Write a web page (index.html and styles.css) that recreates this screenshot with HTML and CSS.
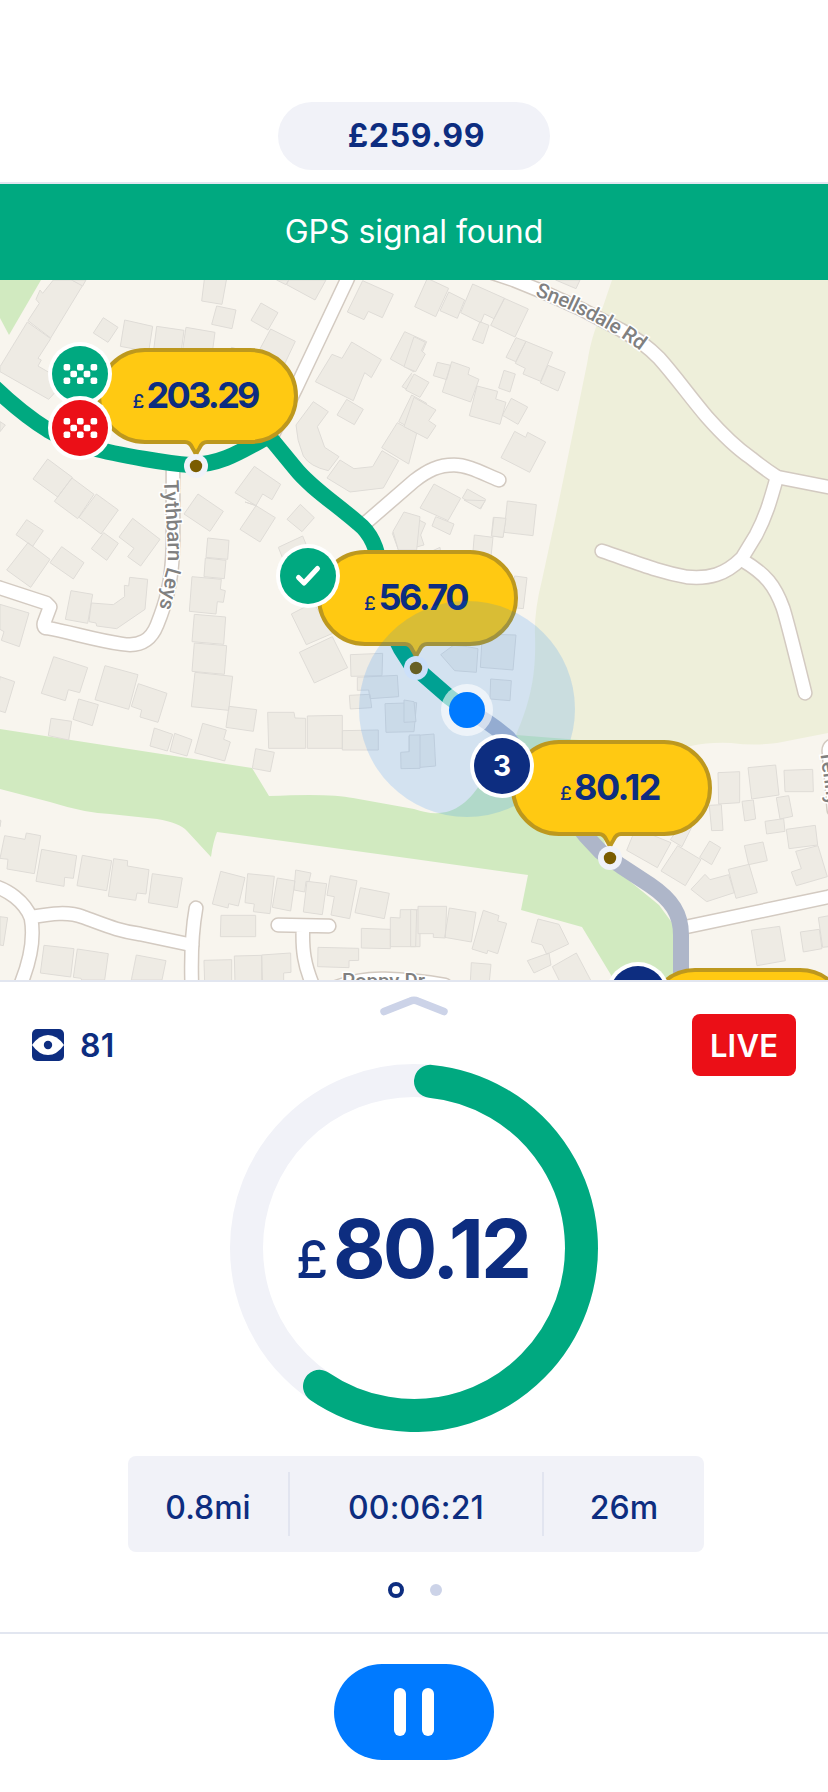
FILE: index.html
```html
<!DOCTYPE html>
<html lang="en">
<head>
<meta charset="utf-8">
<title>Live run</title>
<link rel="stylesheet" href="styles.css">
</head>
<body>
<div class="app">
  <header class="header"><div class="total"><span>£259.99</span></div></header>
  <div class="banner"><span>GPS signal found</span></div>

  <svg class="map" viewBox="0 280 828 700" width="828" height="700">
    <defs>
      <g id="flag">
        <circle r="32" fill="#fff"/><circle r="28" fill="var(--c)"/>
        <g fill="#fff">
          <rect x="-16.4" y="-10" width="6.6" height="6.6" rx="1.8"/><rect x="-3" y="-10" width="6.6" height="6.6" rx="1.8"/><rect x="10.6" y="-10" width="6.6" height="6.6" rx="1.8"/>
          <rect x="-9.6" y="-3.3" width="6.6" height="6.6" rx="1.8"/><rect x="3.7" y="-3.3" width="6.6" height="6.6" rx="1.8"/>
          <rect x="-16.4" y="3.4" width="6.6" height="6.6" rx="1.8"/><rect x="-3" y="3.4" width="6.6" height="6.6" rx="1.8"/><rect x="10.6" y="3.4" width="6.6" height="6.6" rx="1.8"/>
        </g>
      </g>
      <g id="pin">
        <path class="pin-body" d="M-51-116H54a46 46 0 0 1 0 92H11Q6-24 3.500-18Q1-14 0-11.500Q-1-14-3.500-18Q-6-24-11-24H-51a46 46 0 0 1 0-92Z"/>
        <circle r="12" fill="#f0f2f9"/><circle r="6.200" fill="#7a5c00"/>
      </g>
      <g id="roads">
        <path d="M352 268L347 280L296 388L270 440"/>
        <path d="M490 272L514 280L541 291L581 309L621 330C640 341 648 347 659 358C676 377 690 397 707 417C722 434 735 447 751 458Q762 467 777 477L828 487L840 489"/>
        <path d="M777 477C770 502 766 516 756 535L742 558C725 575 709 579 687 577C660 572 640 564 602 551"/>
        <path d="M742 560C766 574 775 586 783 608Q787 620 805 693"/>
        <path d="M499 480C482 473 468 465 454 465C439 465 428 470 414 481L362 526"/>
        <path d="M173 465L173 545C172 585 165 605 157 625C151 640 140 647 122 644C95 640 70 632 47 628Q43 628 44 623L50 607L46 603L0 588L-10 585"/>
        <path d="M-10 885C8 889 25 902 31 918C35 940 30 962 20 986"/>
        <path d="M31 917C50 914 68 911 83 917C105 925 118 931 140 934L192 945"/>
        <path d="M196 908Q190 942 192 990"/>
        <path d="M278 925L329 926M303 926C302 950 304 965 314 988"/>
        <path d="M320 995Q350 978 385 979Q415 980 445 985"/>
        <path d="M681 928L828 897L840 894"/>
        <path d="M840 744Q828 744 829 752L834 810"/>
      </g>
      <path id="snell" d="M535 296C565 306 618 331 652 360"/>
      <path id="tyth" d="M164 480C165 520 171 555 166 572Q164 592 158 612"/>
    </defs>

    <rect y="280" width="828" height="700" fill="#f8f5ee"/>
    <path fill="#eeefda" d="M612 280L594 333Q590 345 587 364L555 520L542 580Q534 612 535 635C536 668 533 696 516 735L560 770L640 760L691 746Q709 742 731 743Q755 746 777 743L828 733V280Z"/>
    <g fill="#d1eac0">
      <path d="M0 280H41L9 335L0 318Z"/>
      <path d="M0 729L252 768L269 796Q330 793 353 798L414 809C445 820 466 809 484 778L516 735L580 740L610 865L659 905L681 935V980H614L582 927L521 910L528 875L414 859L217 832Q213 842 211 857L187 831Q180 823 157 819L110 814Q85 813 50 802L0 789Z"/>
    </g>

    <g class="buildings">
      <g transform="translate(0 280) scale(.33333)">
        <path d="M160 0L128 40L120 30L108 58L118 70L84 122L152 174L248 16L215 0Z"/>
        <path d="M82 126L152 176L114 235L124 240L114 258L155 282L190 310L146 358L0 275V260Z"/>
        <path d="M215 0L248 18L258 0ZM0 425L16 435L0 455Z"/>
        <path d="M310 113L354 142L324 187L280 159ZM374 120L458 139L446 215L361 199ZM470 139L552 151L542 225L461 210ZM558 142L645 157L636 225L548 210Z"/>
        <path d="M614 -10H681L666 73L605 63ZM650 78L708 90L696 146L635 133ZM783 69L834 98L804 150L753 121ZM812 147L886 184L850 260L776 214ZM694 202L740 215L710 240Z"/>
        <path d="M830 0L858 14L866 0ZM866 0L860 14L945 60L978 0Z"/>
        <path d="M1088 2L1180 43L1147 113L1105 94L1092 119L1042 96ZM1055 186L1144 239L1114 293L1094 278L1060 362L946 305L996 223L1026 235Z"/>
        <path d="M1214 155L1280 185L1242 276L1171 237ZM1236 278L1206 320L1250 345M1040 358L1090 388L1063 434L1011 405Z"/>
        <path d="M940 365L985 395L952 440L974 502L1017 530L985 572Q930 560 910 528Q890 480 888 435Z"/>
        <path d="M1020 540L1062 566L1118 560L1146 512L1196 542L1150 624L1050 636L981 594Z"/>
        <path d="M1192 428L1250 460L1226 552L1145 503ZM1235 345L1280 370L1250 455L1196 425Z"/>
        <path d="M143 537L217 592L173 651L99 597ZM216 594L282 643L233 716L163 664ZM289 642L355 690L303 762L237 712Z"/>
        <path d="M763 559L842 613L816 659L788 642L768 677L705 638ZM594 642L670 694L630 754L552 702ZM768 677L826 713L780 786L720 748ZM901 673L943 713L906 755L861 718ZM735 666L770 677L764 676Z"/>
      </g>
      <g transform="translate(414 280) scale(.33333)">
        <path d="M40 -5L104 25L65 110L2 80ZM104 36L152 60L130 115L78 92ZM176 12L272 55L240 116L211 102L200 128L140 98ZM271 55L343 87L303 171L230 136ZM198 125L225 136L207 191L175 179Z"/>
        <path d="M306 173L336 184L305 245L276 232ZM336 184L416 217L380 304L327 282L334 265L304 250ZM402 256L454 277L432 333L379 309ZM425 0L486 26L498 0Z"/>
        <path d="M0 170L34 187L22 212L34 222L5 275L-30 260ZM70 247L110 256L98 299L58 287ZM113 245L167 264L162 283L195 298L170 366L85 336ZM0 282L45 307L18 352L-25 330ZM189 318L251 334L245 357L276 367L258 433L166 407ZM270 271L304 282L288 336L254 324ZM292 355L341 381L312 433L265 406Z"/>
        <path d="M0 352L66 390L44 422L66 437L40 476L-30 440ZM302 454L335 472L341 457L395 486L347 577L261 533ZM60 612L140 655L102 722L18 684ZM160 627L215 658L200 687L145 654ZM280 663L367 674L357 767L270 757ZM238 712L275 717L267 772L232 768Z"/>
        <path d="M-25 700L35 730L20 765L30 795L-45 815L-65 760ZM65 710L120 732L108 764L54 738ZM150 660L214 662L198 686Z"/>
      </g>
      <g transform="translate(0 500) scale(.33333)">
        <path d="M80 59L130 92L98 139L48 104ZM84 128L150 178L92 262L20 210ZM185 140L252 188L220 237L150 188ZM311 98L355 130L320 181L274 146ZM398 55L480 118L422 198L383 170L402 145L357 111Z"/>
        <path d="M213 272L278 283L263 370L196 358ZM389 232L443 238L435 328L350 386L290 378L288 369L267 365L274 309L340 314L374 290L373 256L386 258Z"/>
        <path d="M0 313L87 339L58 440L4 421L12 395L0 388ZM0 530L44 545L16 638L-10 630ZM161 470L263 503L239 578L205 569L196 602L124 580ZM315 497L414 524L386 628L285 599ZM415 551L501 580L474 667L420 651L425 630L394 619ZM236 597L295 614L277 677L219 658ZM153 655L215 664L206 720L145 707Z"/>
        <path d="M623 114L687 121L683 178L618 172ZM616 174L678 181L673 236L612 230ZM576 230L664 238L661 268L676 272L670 307L652 305L648 342L568 334ZM583 343L677 351L671 433L576 425ZM583 429L680 437L673 523L576 514ZM585 517L698 529L686 631L574 620ZM687 619L770 629L760 694L678 682Z"/>
        <path d="M835 142L908 108L925 150L850 180ZM874 342L940 308L998 400L919 434ZM997 410L1043 503L943 549L898 457ZM1051 464L1148 460L1146 527L1053 529ZM1072 532L1192 526L1196 590L1110 596L1106 570L1072 571ZM1048 586L1110 583L1115 623L1051 627ZM1155 611L1250 608L1242 695L1158 697Z"/>
        <path d="M1212 36L1260 50L1250 150H1195L1179 94ZM803 637H882L885 654L917 655V745H806ZM922 648L1027 646V745H922ZM1027 692L1135 690V750H1027ZM463 684L518 703L502 753L450 738ZM524 700L576 719L561 768L510 754ZM608 670L679 690L671 718L691 726L674 783L584 758ZM767 746L823 757L811 815L757 805Z"/>
      </g>
      <g transform="translate(414 500) scale(.33333)">
        <path d="M181 105L237 112L230 180L176 165ZM240 52L276 55L267 112L233 108ZM302 228L339 233L328 326L290 322ZM205 402L306 405L297 510L199 502ZM118 436L160 440L192 446L187 517L122 512L80 464ZM230 537L292 542L288 602L228 597ZM0 605L6 665L-30 667V600ZM-15 708L60 702L65 798L-15 805ZM50 155L78 142L80 160Z"/>
      </g>
      <g transform="translate(0 730) scale(.33333)">
        <path d="M14 317L75 328L79 309L122 317L103 431L21 417L24 388L0 385ZM125 358L230 377L220 445L194 442L192 469L108 454ZM247 376L335 392L320 482L231 467ZM341 386L383 392L382 408L447 419L438 492L411 489L407 511L325 499ZM457 431L547 444L532 533L445 518ZM0 270L3 272L0 290ZM0 560L23 563L10 647L0 645Z"/>
        <path d="M132 646L222 656L212 741L121 729ZM232 657L325 671L314 750H245L243 745L220 742ZM409 675L498 692L486 750H394ZM612 691L695 689V760H614ZM703 678L785 676V760H705ZM785 675L872 669L873 727L851 729V760H788Z"/>
        <path d="M662 424L735 443L715 528L686 521L684 534L637 522ZM743 431L823 439L810 551L760 545L763 522L735 518ZM832 444L885 453L872 543L817 532ZM887 420L933 429L927 455L918 454L914 486L882 480ZM921 454L980 461L967 554L910 546ZM991 437L1071 452L1049 566L993 555L1003 500L981 496ZM1081 473L1168 490L1153 566L1065 548ZM663 556H767V620H661ZM1084 595L1171 598V656L1084 654ZM1171 562L1200 564L1201 539H1260V650H1171ZM954 652L1076 655V691L1047 692V713L953 710ZM1202 67L1228 65V15H1260V115L1203 116Z"/>
      </g>
      <g transform="translate(414 730) scale(.33333)">
        <path d="M12 529H98L94 624L58 622V611H12ZM106 534L186 547L172 636L92 622ZM208 541L255 557L251 573L278 580L251 671L221 661L219 671L174 657ZM372 567L435 583L464 642L398 673L385 645L352 636ZM405 669L411 705L360 729L340 692ZM487 669L535 760H440L415 710ZM172 698L231 703L226 755H169ZM-10 538L8 540L5 650H-10Z"/>
        <path d="M912 128L977 125V218L914 222ZM1002 113L1085 105L1095 195L1013 207ZM1110 121L1196 118L1198 185H1113ZM984 214L1018 210L1025 267L992 273ZM1087 203L1124 197L1136 259L1098 267ZM1053 274L1109 266L1113 304L1058 312ZM886 226L922 224L927 301L893 302ZM1117 298L1204 286L1211 345L1125 356ZM991 347L1047 336L1060 392L1004 404ZM1145 364L1212 347L1240 440L1147 467L1132 426L1162 416ZM943 418L1005 403L1030 488L966 505ZM873 433L888 449L944 434L961 488L878 515L831 478ZM887 333L920 353L893 404L857 382ZM791 347L861 389L814 467L741 423ZM665 295L771 338L730 413L638 361ZM800 285L833 292L804 350L769 329Z"/>
        <path d="M1012 601L1097 589L1114 692L1029 707ZM1159 606L1216 598L1224 656L1168 666ZM1213 563L1245 557V650L1226 652Z"/>
      </g>
    </g>

    <use href="#roads" class="casing"/>
    <use href="#roads" class="road"/>

    <g class="street">
      <text textLength="119"><textPath href="#snell">Snellsdale Rd</textPath></text>
      <text textLength="129"><textPath href="#tyth">Tythbarn Leys</textPath></text>
      <text x="342" y="988" textLength="83">Poppy Dr</text>
      <text transform="translate(820 751) rotate(82)">Tenny</text>
    </g>

    <path class="route ahead" d="M467 710Q490 722 508 738L586 836L601 852L621 866L650 885C672 900 681 914 681 935V980"/>
    <path class="route done" d="M-6 387C18 410 32 420 48 430C75 446 105 452 145 459Q174 464 190 465C220 465 240 452 267 437L272 440L295 468C310 487 335 503 358 523C371 533 378 550 380 570Q388 625 401 649L410 663L449 697L467 710"/>

    <use href="#pin" x="416" y="668"/>
    <g class="amount"><text class="pound" x="364" y="610">£</text><text x="378.500" y="610" textLength="91">56.70</text></g>
    <circle cx="467" cy="709" r="108" fill="#007aff" opacity=".15"/>
    <circle cx="467" cy="710" r="26" fill="#fff" opacity=".6"/>
    <circle cx="467" cy="710" r="18" fill="#007aff"/>

    <use href="#pin" x="196" y="466"/>
    <g class="amount"><text class="pound" x="132.500" y="408">£</text><text x="146.500" y="408" textLength="114">203.29</text></g>
    <use href="#pin" x="610" y="858"/>
    <g class="amount"><text class="pound" x="560" y="800">£</text><text x="574" y="800" textLength="87.500">80.12</text></g>
    <use href="#pin" x="746" y="1086"/>

    <use href="#flag" x="80" y="374" class="start"/>
    <use href="#flag" x="80" y="428" class="finish"/>
    <circle cx="308" cy="576" r="32" fill="#fff"/><circle cx="308" cy="576" r="28" fill="#00a980"/>
    <path d="M298.500 577.500L304 583L317.500 568.500" fill="none" stroke="#fff" stroke-width="5" stroke-linecap="round" stroke-linejoin="round"/>
    <circle cx="502" cy="766" r="32" fill="#fff"/><circle cx="502" cy="766" r="28" fill="#0d2d80"/>
    <text class="step" x="502" y="776">3</text>
    <circle cx="638" cy="994" r="32" fill="#fff"/><circle cx="638" cy="994" r="28" fill="#0d2d80"/>
  </svg>

  <main class="panel">
    <div class="overview">
      <div class="viewers">
        <svg width="32" height="32" viewBox="0 0 32 32"><rect width="32" height="32" rx="5" fill="#0d2d80"/><path d="M0 16Q7 6 16 6T32 16Q25 26 16 26T0 16Z" fill="#fff"/><circle cx="16" cy="16" r="4.200" fill="#0d2d80"/></svg>
        <span>81</span>
      </div>
      <div class="center">
        <svg class="handle" width="68" height="20" viewBox="0 0 68 20"><path d="M4 15.500L30 5.200Q34 3.500 38 5.200L64 15.500" fill="none" stroke="#ccd3e8" stroke-width="7.500" stroke-linecap="round"/></svg>
        <svg class="ring" width="368" height="368" viewBox="0 0 368 368">
          <circle cx="184" cy="184" r="167.500" fill="none" stroke="#f1f2f8" stroke-width="33"/>
          <path d="M200.500 17.300A167.500 167.500 0 1 1 89.500 322.300" fill="none" stroke="#00a980" stroke-width="33" stroke-linecap="round"/>
          <g class="value"><text class="sign" x="66" y="213.700">£</text><text x="103" y="213.700" textLength="199">80.12</text></g>
        </svg>
      </div>
      <div class="live"><span>LIVE</span></div>
    </div>
    <div class="stats">
      <div class="stat"><span>0.8mi</span></div>
      <div class="stat wide"><span>00:06:21</span></div>
      <div class="stat"><span>26m</span></div>
    </div>
    <div class="pager"><i class="on"></i><i></i></div>
  </main>
  <footer class="controls"><button class="pause" aria-label="Pause"><i></i><i></i></button></footer>
</div>
</body>
</html>
```

FILE: styles.css
```css
* { box-sizing: border-box; }
body { margin: 0; background: #fff; font-family: Inter, "Liberation Sans", sans-serif; color: #0d2d80; }
.app { width: 828px; height: 1792px; display: flex; flex-direction: column; overflow: hidden; }

.header { height: 184px; padding-top: 102px; border-bottom: 2px solid #e2e6f0; display: flex; justify-content: center; align-items: flex-start; }
.total { width: 272px; height: 68px; border-radius: 34px; background: #f1f2f8; display: flex; align-items: center; justify-content: center; font-size: 32px; font-weight: 650; letter-spacing: .7px; padding: 0 0 2px 5px; }
.banner { height: 96px; background: #00a980; color: #fff; display: flex; align-items: center; justify-content: center; font-size: 32px; letter-spacing: -.05px; padding-bottom: 2px; }

.map { display: block; flex: none; }
.buildings { fill: #eeebe4; stroke: #dfdcd7; stroke-width: 3; stroke-linejoin: round; }
.casing, .road { fill: none; stroke-linecap: round; stroke-linejoin: round; }
.casing { stroke: #d3cac1; stroke-width: 15.4px; }
.road { stroke: #fff; stroke-width: 12.4px; }
.street { font-family: Roboto, sans-serif; font-size: 20.5px; font-weight: 500; fill: #808080; stroke: #fff; stroke-width: 3px; paint-order: stroke; }
.route { fill: none; stroke-width: 16px; stroke-linejoin: round; }
.done { stroke: #00a980; }
.ahead { stroke: #aeb6c9; }
.pin-body { fill: #ffc912; stroke: #bd981e; stroke-width: 4px; stroke-linejoin: round; }
.start { --c: #00a980; }
.finish { --c: #eb0f17; }
.amount { font-size: 36px; font-weight: 700; fill: #0d2d80; }
.pound { font-size: 19px; font-weight: 500; }
.step { font-size: 28px; font-weight: 650; fill: #fff; text-anchor: middle; }

.panel { height: 654px; border-top: 2px solid #e2e6f0; border-bottom: 2px solid #e2e6f0; padding-top: 14px; display: flex; flex-direction: column; align-items: center; }
.overview { width: 764px; display: grid; grid-template-columns: 1fr 368px 1fr; align-items: start; }
.viewers { margin-top: 33px; height: 32px; display: flex; align-items: center; gap: 16px; font-size: 32px; font-weight: 600; letter-spacing: .3px; }
.center { display: flex; flex-direction: column; align-items: center; gap: 48px; }
.handle, .ring { display: block; }
.value { font-size: 81px; font-weight: 700; fill: #0d2d80; }
.sign { font-size: 52px; font-weight: 500; }
.live { justify-self: end; margin-top: 18px; width: 104px; height: 62px; border-radius: 8px; background: #eb0f17; color: #fff; display: flex; align-items: center; justify-content: center; font-size: 31px; font-weight: 600; letter-spacing: .2px; padding-top: 1px; }

.stats { margin: 24px 0 0 4px; width: 576px; height: 96px; flex: none; border-radius: 8px; background: #f1f2f8; display: grid; grid-template-columns: 160px 1fr 160px; align-items: center; font-size: 32px; font-weight: 500; }
.stat { height: 64px; display: flex; align-items: center; justify-content: center; padding-top: 6px; }
.wide { border: solid #e2e5f0; border-width: 0 2px; letter-spacing: .2px; }
.pager { margin: 30px 0 0 2px; height: 16px; display: flex; align-items: center; justify-content: center; gap: 26px; width: 60px; }
.pager i { width: 12px; height: 12px; flex: none; border-radius: 50%; background: #ccd3e8; }
.pager .on { width: 16px; height: 16px; background: none; border: 4px solid #0d2d80; }

.controls { flex: 1; display: flex; justify-content: center; padding-top: 30px; }
.pause { width: 160px; height: 96px; border: 0; border-radius: 48px; background: #007aff; display: flex; align-items: center; justify-content: center; gap: 16px; padding: 0; }
.pause i { width: 12px; height: 48px; border-radius: 6px; background: #fff; }
```
